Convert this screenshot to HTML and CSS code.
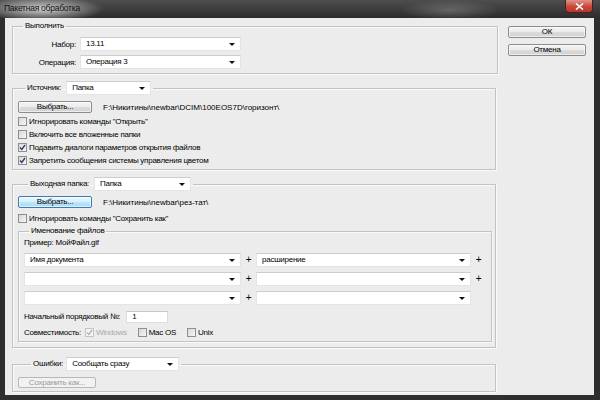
FILE: index.html
```html
<!DOCTYPE html>
<html lang="ru">
<head>
  <meta charset="UTF-8" />
  <title>Пакетная обработка</title>
  <link rel="stylesheet" href="styles.css">
</head>
<body>
  <div class="window">
    <div class="titlebar">
      <span class="title">Пакетная обработка</span>
      <span class="close">
        <svg width="9" height="7" viewBox="0 0 9 7"><path d="M1 0.5 L8 6.5 M8 0.5 L1 6.5" stroke="#fff" stroke-width="1.6"/></svg>
      </span>
    </div>
    <div class="frame">
      <div class="client">
        <div class="main">

          <fieldset class="group g-play">
            <legend>Выполнить</legend>
            <div class="form-grid">
              <span class="lbl">Набор:</span>
              <div class="select w161"><span>13.11</span></div>
              <span class="lbl">Операция:</span>
              <div class="select w161"><span>Операция 3</span></div>
            </div>
          </fieldset>

          <fieldset class="group g-source">
            <legend class="legend-src">Источник: <div class="select w85"><span>Папка</span></div></legend>
            <div class="path-row">
              <button class="btn w74">Выбрать...</button>
              <span class="path">F:\Никитины\newbar\DCIM\100EOS7D\горизонт\</span>
            </div>
            <div class="checks">
              <div class="check-row"><span class="cb"></span>Игнорировать команды "Открыть"</div>
              <div class="check-row"><span class="cb"></span>Включить все вложенные папки</div>
              <div class="check-row"><span class="cb checked"><svg width="7" height="7" viewBox="0 0 7 7"><path d="M1 3.5 L2.8 5.5 L6 1" fill="none" stroke="#2a3c6a" stroke-width="1.3"/></svg></span>Подавить диалоги параметров открытия файлов</div>
              <div class="check-row"><span class="cb checked"><svg width="7" height="7" viewBox="0 0 7 7"><path d="M1 3.5 L2.8 5.5 L6 1" fill="none" stroke="#2a3c6a" stroke-width="1.3"/></svg></span>Запретить сообщения системы управления цветом</div>
            </div>
          </fieldset>

          <fieldset class="group g-dest">
            <legend class="legend-dest">Выходная папка: <div class="select w97"><span>Папка</span></div></legend>
            <div class="path-row">
              <button class="btn btn-focus w74">Выбрать...</button>
              <span class="path">F:\Никитины\newbar\рез-тат\</span>
            </div>
            <div class="check-row single"><span class="cb"></span>Игнорировать команды "Сохранить как"</div>

            <fieldset class="group g-naming">
              <legend>Именование файлов</legend>
              <div class="example">Пример: МойФайл.gif</div>
              <div class="name-rows">
                <div class="name-row">
                  <div class="select w217"><span>Имя документа</span></div>
                  <span class="plus">+</span>
                  <div class="select w215"><span>расширение</span></div>
                  <span class="plus">+</span>
                </div>
                <div class="name-row">
                  <div class="select w217"><span></span></div>
                  <span class="plus">+</span>
                  <div class="select w215"><span></span></div>
                  <span class="plus">+</span>
                </div>
                <div class="name-row">
                  <div class="select w217"><span></span></div>
                  <span class="plus">+</span>
                  <div class="select w215"><span></span></div>
                  <span class="plus"></span>
                </div>
              </div>
              <div class="num-row">
                <span>Начальный порядковый №:</span>
                <span class="input">1</span>
              </div>
              <div class="compat-row">
                <span>Совместимость:</span>
                <span class="opt disabled"><span class="cb checked"><svg width="7" height="7" viewBox="0 0 7 7"><path d="M1 3.5 L2.8 5.5 L6 1" fill="none" stroke="#b4b4b4" stroke-width="1.3"/></svg></span>Windows</span>
                <span class="opt"><span class="cb"></span>Mac OS</span>
                <span class="opt"><span class="cb"></span>Unix</span>
              </div>
            </fieldset>
          </fieldset>

          <fieldset class="group g-errors">
            <legend class="legend-err">Ошибки: <div class="select w113"><span>Сообщать сразу</span></div></legend>
            <button class="btn btn-disabled w78">Сохранить как...</button>
          </fieldset>

        </div>
        <div class="side">
          <button class="btn w78">ОК</button>
          <button class="btn w78">Отмена</button>
        </div>
      </div>
    </div>
  </div>
</body>
</html>
```

FILE: styles.css
```css
body {
  margin: 0;
  font-family: "Liberation Sans", Arial, sans-serif;
  font-size: 8px;
  letter-spacing: -0.25px;
  color: #000;
  background: #2b2b2b;
}
.window {
  width: 600px;
  height: 400px;
  display: flex;
  flex-direction: column;
  background: #2e2e2e;
}
.titlebar {
  height: 18px;
  flex: none;
  display: flex;
  align-items: flex-start;
  justify-content: space-between;
  background:
    radial-gradient(ellipse 62px 13px at 42px 9px, rgba(225,225,225,0.9), rgba(225,225,225,0)),
    radial-gradient(ellipse 50px 10px at 450px 10px, rgba(150,150,150,0.45), rgba(150,150,150,0)),
    linear-gradient(#4e4e4e, #2c2c2c);
}
.title {
  padding: 3px 0 0 4px;
  line-height: 11px;
  font-size: 8.5px;
  color: #111;
}
.close {
  width: 28px;
  height: 13px;
  margin-right: 7px;
  display: flex;
  align-items: center;
  justify-content: center;
  border: 1px solid #4a2020;
  border-top: none;
  border-radius: 0 0 4px 4px;
  box-sizing: border-box;
  background: linear-gradient(#e0948a, #c9473a 55%, #b8382c);
}
.frame {
  flex: 1;
  padding: 0 6px 5px 5px;
  display: flex;
}
.client {
  flex: 1;
  display: flex;
  align-items: flex-start;
  padding: 3px 0 0 7px;
  background: #ececec;
}
.main {
  width: 486px;
  flex: none;
}
.side {
  margin-left: 10px;
  padding-top: 5px;
  display: flex;
  flex-direction: column;
  gap: 6px;
}

/* group boxes */
.group {
  margin: 0;
  min-width: 0;
  border: 1px solid #c2c2c2;
  box-shadow: inset 1px 1px 0 #fafafa, 1px 1px 0 #fafafa;
}
.group legend {
  padding: 0 2px;
  line-height: 10px;
}
.group legend.legend-src,
.group legend.legend-dest,
.group legend.legend-err {
  display: flex;
  align-items: center;
  gap: 5px;
}
.g-play {
  padding: 6px 0 4px 0;
}
.g-play legend { margin-left: 10px; }
.g-source {
  margin: 7px 2px 0 0;
  padding: 6px 3px 2px 5px;
}
.legend-src { margin-left: 7px; }
.g-dest {
  margin: 7px 2px 0 0;
  padding: 5px 3px 5px 5px;
}
.legend-dest { margin-left: 10px; }
.g-naming {
  margin-top: 1px;
  padding: 2px 3px 2px 5px;
}
.g-naming legend { margin-left: 5px; }
.g-errors {
  margin: 9px 2px 0 0;
  padding: 6px 3px 3px 5px;
}
.legend-err { margin-left: 13px; gap: 3px !important; }

/* form parts */
.form-grid {
  display: grid;
  grid-template-columns: 63px 161px;
  column-gap: 4px;
  row-gap: 4px;
  align-items: center;
}
.lbl {
  text-align: right;
}
.select {
  height: 14px;
  box-sizing: border-box;
  display: flex;
  align-items: center;
  justify-content: space-between;
  padding: 0 5px 0 5px;
  background: #fff;
  border: 1px solid #e4e4e4;
  border-top-color: #cdcdcd;
  line-height: 12px;
}
.select::after {
  content: "";
  width: 0;
  height: 0;
  border-left: 3px solid transparent;
  border-right: 3px solid transparent;
  border-top: 3px solid #111;
  margin-top: 1px;
}
.w85 { width: 85px; }
.w97 { width: 97px; }
.w113 { width: 113px; }
.w161 { width: 161px; }
.w215 { width: 215px; }
.w217 { width: 217px; }
.w74 { width: 74px; }
.w78 { width: 78px; }

.btn {
  height: 12px;
  padding: 0;
  box-sizing: border-box;
  font: inherit;
  letter-spacing: inherit;
  line-height: 10px;
  color: #000;
  border: 1px solid #8c8c8c;
  border-radius: 2px;
  background: linear-gradient(#f4f4f4, #ececec 45%, #dcdcdc 50%, #d2d2d2);
  box-shadow: inset 0 0 0 1px rgba(255,255,255,0.6);
}
.btn-focus {
  border-color: #3d7bad;
  background: linear-gradient(#e9f6fd, #d9f0fc 45%, #bee6fd 50%, #a7d9f5);
}
.btn-disabled {
  height: 11px;
  color: #9b9b9b;
  border-color: #b8b8b8;
  background: #f2f2f2;
  box-shadow: none;
}
.path-row {
  height: 12px;
  display: flex;
  align-items: center;
  gap: 11px;
}
.path {
  letter-spacing: 0;
}
.checks {
  margin-top: 2px;
}
.check-row {
  height: 13px;
  display: flex;
  align-items: center;
  gap: 2px;
}
.check-row.single {
  margin-top: 4px;
}
.cb {
  width: 9px;
  height: 9px;
  box-sizing: border-box;
  flex: none;
  display: flex;
  align-items: center;
  justify-content: center;
  border: 1px solid #8e8f8f;
  background: linear-gradient(135deg, #d8d8d8, #f6f6f6);
}
.example {
  line-height: 10px;
}
.name-rows {
  margin-top: 5px;
  display: flex;
  flex-direction: column;
  gap: 5px;
}
.name-row {
  display: flex;
  align-items: center;
}
.plus {
  width: 15px;
  text-align: center;
  font-size: 10px;
  line-height: 10px;
}
.num-row {
  margin-top: 5px;
  height: 13px;
  display: flex;
  align-items: center;
  gap: 6px;
}
.input {
  width: 42px;
  height: 12px;
  box-sizing: border-box;
  padding-left: 5px;
  line-height: 10px;
  background: #fff;
  border: 1px solid #dcdcdc;
  border-top-color: #c8c8c8;
}
.compat-row {
  margin-top: 3px;
  height: 13px;
  display: flex;
  align-items: center;
  gap: 4px;
}
.opt {
  display: flex;
  align-items: center;
  gap: 2px;
  margin-right: 7px;
}
.opt.disabled {
  color: #a8a8a8;
}
.opt.disabled .cb {
  border-color: #c4c4c4;
  background: #f4f4f4;
}
```
